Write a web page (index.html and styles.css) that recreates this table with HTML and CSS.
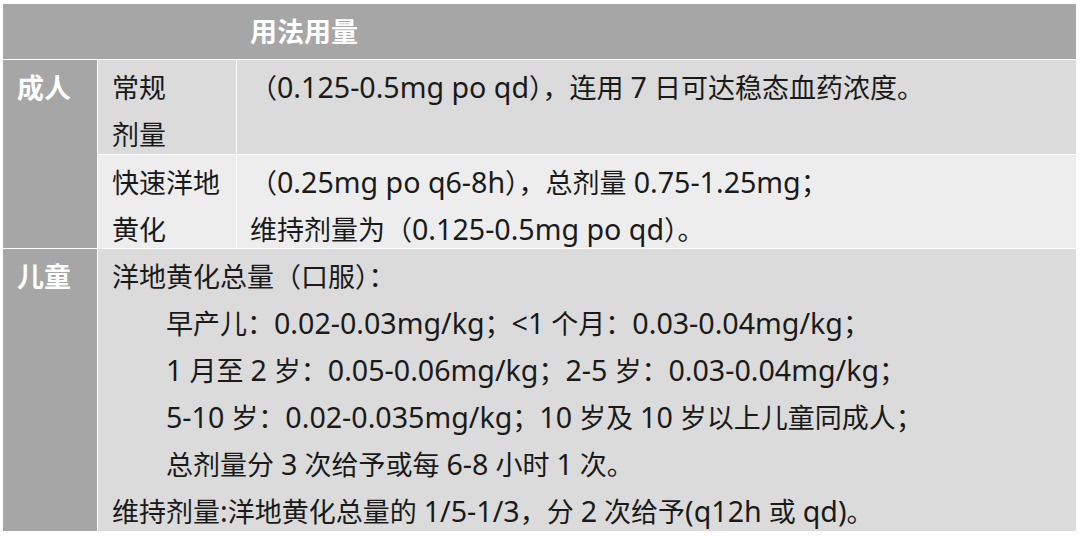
FILE: index.html
```html
<!DOCTYPE html>
<html lang="zh-CN">
<head>
<meta charset="utf-8">
<title>用法用量</title>
<link rel="stylesheet" href="styles.css">
</head>
<body>
<div class="table">
  <div class="cell head">用法用量</div>
  <div class="cell side adult">成人</div>
  <div class="cell sub r1">常规<br>剂量</div>
  <div class="cell body r1">（<span class="en">0.125-0.5mg po qd</span>），连用 <span class="en">7</span> 日可达稳态血药浓度。</div>
  <div class="cell sub r2">快速洋地<br>黄化</div>
  <div class="cell body r2">（<span class="en">0.25mg po q6-8h</span>），总剂量 <span class="en">0.75-1.25mg</span>；<br>维持剂量为（<span class="en">0.125-0.5mg po qd</span>）。</div>
  <div class="cell side">儿童</div>
  <div class="cell child r3">
    <div class="line">洋地黄化总量（口服）：</div>
    <div class="line indent">早产儿：<span class="en">0.02-0.03mg/kg</span>；<span class="en">&lt;1</span> 个月：<span class="en">0.03-0.04mg/kg</span>；</div>
    <div class="line indent"><span class="en">1</span> 月至 <span class="en">2</span> 岁：<span class="en">0.05-0.06mg/kg</span>；<span class="en">2-5</span> 岁：<span class="en">0.03-0.04mg/kg</span>；</div>
    <div class="line indent"><span class="en">5-10</span> 岁：<span class="en">0.02-0.035mg/kg</span>；<span class="en">10</span> 岁及 <span class="en">10</span> 岁以上儿童同成人；</div>
    <div class="line indent">总剂量分 <span class="en">3</span> 次给予或每 <span class="en">6-8</span> 小时 <span class="en">1</span> 次。</div>
    <div class="line">维持剂量<span class="en">:</span>洋地黄化总量的 <span class="en">1/5-1/3</span>，分 <span class="en">2</span> 次给予<span class="en">(q12h</span> 或 <span class="en">qd)</span>。</div>
  </div>
</div>
</body>
</html>
```

FILE: styles.css
```css
html, body {
  margin: 0;
  padding: 0;
  background: #ffffff;
}

body {
  padding: 4px 0 0 3px;
  font-family: "Noto Sans", "Noto Sans CJK SC", sans-serif;
  font-size: 27px;
  color: #1a1a1a;
}

.table {
  display: grid;
  width: 1073px;
  grid-template-columns: 94px 138px 1fr;
  grid-template-rows: 55px 94px 93px 282px;
  gap: 1px;
  background: #ffffff;
}

.cell {
  line-height: 47px;
  box-sizing: border-box;
  padding-top: 4px;
  overflow: hidden;
}

.en {
  font-size: 1.06em;
  line-height: 1;
}

.head {
  grid-column: 1 / 4;
  background: #a6a6a6;
  color: #ffffff;
  font-weight: bold;
  line-height: 55px;
  padding-top: 0;
  padding-left: 247px;
}

.side {
  background: #a6a6a6;
  color: #ffffff;
  font-weight: bold;
  padding-left: 14px;
}

.adult {
  grid-row: 2 / 4;
}

.sub {
  padding-left: 14px;
}

.body {
  padding-left: 13px;
}

.child {
  grid-column: 2 / 4;
  padding-left: 14px;
}

.r1, .r3 {
  background: #dbdbdb;
}

.r2 {
  background: #ededed;
}

.indent {
  padding-left: 2em;
}
```
